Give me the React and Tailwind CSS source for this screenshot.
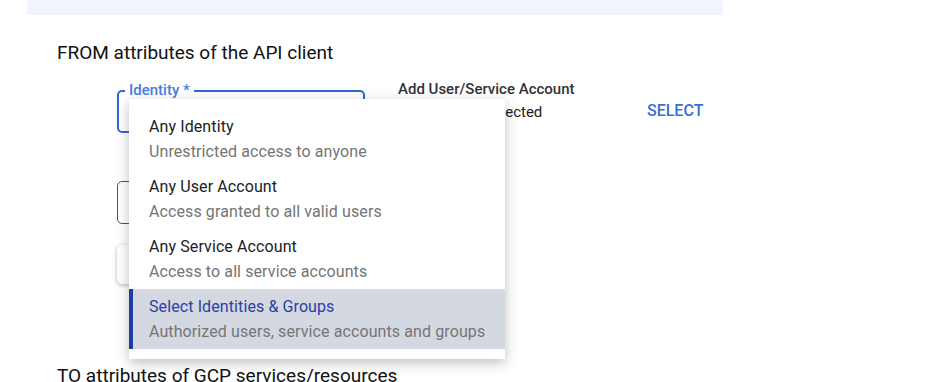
import React from "react";

const options = [
  { title: "Any Identity", desc: "Unrestricted access to anyone" },
  { title: "Any User Account", desc: "Access granted to all valid users" },
  { title: "Any Service Account", desc: "Access to all service accounts" },
  { title: "Select Identities & Groups", desc: "Authorized users, service accounts and groups", selected: true },
];

function IdentityMenu() {
  return (
    <div className="absolute left-[12px] top-[9px] z-10 w-[376px] bg-white py-[10px] shadow-[0_4px_12px_rgba(0,0,0,0.25)]">
      {options.map((o) => (
        <div
          key={o.title}
          className={
            "flex h-[60px] flex-col justify-center border-l-4 pl-[16px] " +
            (o.selected ? "border-[#1f3ba6] bg-[#d4d8e1]" : "border-transparent")
          }
        >
          <p className={"text-[16px] leading-[22px] tracking-[0.1px] " + (o.selected ? "text-[#2a41a3]" : "text-[#202124]")}>
            {o.title}
          </p>
          <p className="mt-[3px] text-[16px] leading-[22px] tracking-[0.1px] text-[#757575]">{o.desc}</p>
        </div>
      ))}
    </div>
  );
}

export default function App() {
  return (
    <div className="h-[382px] overflow-hidden bg-white font-['Roboto',sans-serif]">
      <div className="ml-[27px] h-[15px] w-[696px] bg-[#f0f5fd]" />

      <h2 className="ml-[57px] mt-[26px] text-[19px] leading-[24px] text-[#111]">FROM attributes of the API client</h2>

      <div className="ml-[117px] mt-[25px] flex">
        <div className="relative w-[248px]">
          <div className="relative h-[43px] rounded-[5px] border-2 border-[#3367d6]">
            <span className="absolute -top-[11px] left-[6px] bg-white px-[4px] text-[15px] font-medium leading-[18px] text-[#4a7be0]">
              Identity *
            </span>
          </div>
          <div className="mt-[48px] h-[43px] rounded-[5px] border border-[#c5221f]" />
          <div className="mt-[21px] h-[39px] rounded-[5px] bg-white shadow-[0_1px_4px_rgba(0,0,0,0.3)]" />
          <IdentityMenu />
        </div>

        <div className="ml-[33px] -mt-[11px] w-[200px]">
          <p className="text-[15px] font-medium leading-[20px] text-[#333]">Add User/Service Account</p>
          <p className="mt-[3px] text-[15px] leading-[20px] text-[#222]">No identities selected</p>
        </div>

        <button className="ml-[49px] mt-[11px] self-start text-[16px] font-medium leading-[20px] text-[#3b6fd6]">
          SELECT
        </button>
      </div>

      <h2 className="ml-[57px] mt-[80px] text-[19px] leading-[24px] text-[#111]">TO attributes of GCP services/resources</h2>
    </div>
  );
}
